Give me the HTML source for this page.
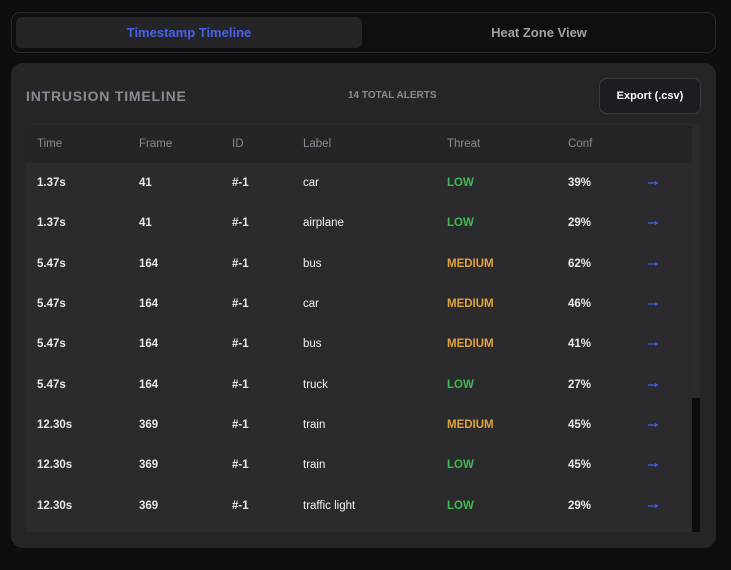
<!DOCTYPE html>
<html><head><style>
*{margin:0;padding:0;box-sizing:border-box}
body{width:731px;height:570px;background:#0e0e10;font-family:"Liberation Sans",sans-serif;position:relative;overflow:hidden;color:#e8e8ec}
.tabs{position:absolute;left:11px;top:12px;width:705px;height:41px;border:1px solid #2a2a2e;border-radius:9px;background:#0f0f11}
.tab{position:absolute;top:4px;height:31px;line-height:31px;text-align:center;font-size:13px;font-weight:bold}
.t1{left:4px;width:346px;background:#252528;border-radius:6px;color:#4660ee}
.t2{left:354px;width:346px;color:#a0a0a8}
.panel{position:absolute;left:11px;top:63px;width:705px;height:485px;background:#262629;border-radius:12px}
.title{position:absolute;left:15px;top:25px;font-size:14px;font-weight:bold;letter-spacing:0.8px;color:#8a8a94}
.total{position:absolute;left:337px;top:27px;font-size:10px;font-weight:bold;color:#8a8a94}
.export{position:absolute;left:588px;top:15px;width:102px;height:36px;border:1px solid #3a3b42;border-radius:8px;background:#1c1d22;color:#fff;font-size:11px;font-weight:bold;text-align:center;line-height:34px}
.tbl{position:absolute;left:15px;top:61px;width:666px;height:408px;overflow:hidden}
.row{position:relative;height:40.3px;font-size:11.5px;font-weight:bold}
.hd{height:39px;background:#252527;color:#8a8a94;font-weight:normal;border-top:1px solid #2c2c30}
.bd{background:#2b2b2e}
.row span{position:absolute;top:50%;transform:translateY(-50%)}
.c1{left:11px}.c2{left:113px}.c3{left:206px}.c4{left:277px}.c5{left:421px}.c6{left:542px}
.hd .c4{font-weight:normal}
.bd .c4{color:#f2f2f4;font-weight:normal}
.row svg{position:absolute;left:622px;top:50%;margin-top:-3px}
.low{color:#3dbb4e}.med{color:#e0a23a}
.sb{position:absolute;left:681px;top:61px;width:8px;height:408px;background:#0e0e10}
.th{position:absolute;left:681px;top:61px;width:8px;height:274px;background:#2c2c30}
</style></head><body>
<svg width="0" height="0" style="position:absolute"><defs><symbol id="a" viewBox="0 0 10 6"><path d="M0 3H9M7 1.5L9.5 3L7 4.5" stroke="#3a5cf0" stroke-width="1.2" fill="#3a5cf0"/></symbol></defs></svg>
<div class="tabs"><div class="tab t1">Timestamp Timeline</div><div class="tab t2">Heat Zone View</div></div>
<div class="panel">
<div class="title">INTRUSION TIMELINE</div>
<div class="total">14 TOTAL ALERTS</div>
<div class="export">Export (.csv)</div>
<div class="tbl">
<div class="row hd"><span class="c1">Time</span><span class="c2">Frame</span><span class="c3">ID</span><span class="c4">Label</span><span class="c5">Threat</span><span class="c6">Conf</span></div>
<div class="row bd"><span class="c1">1.37s</span><span class="c2">41</span><span class="c3">#-1</span><span class="c4">car</span><span class="c5 low">LOW</span><span class="c6">39%</span><svg width="10" height="6"><use href="#a"/></svg></div>
<div class="row bd"><span class="c1">1.37s</span><span class="c2">41</span><span class="c3">#-1</span><span class="c4">airplane</span><span class="c5 low">LOW</span><span class="c6">29%</span><svg width="10" height="6"><use href="#a"/></svg></div>
<div class="row bd"><span class="c1">5.47s</span><span class="c2">164</span><span class="c3">#-1</span><span class="c4">bus</span><span class="c5 med">MEDIUM</span><span class="c6">62%</span><svg width="10" height="6"><use href="#a"/></svg></div>
<div class="row bd"><span class="c1">5.47s</span><span class="c2">164</span><span class="c3">#-1</span><span class="c4">car</span><span class="c5 med">MEDIUM</span><span class="c6">46%</span><svg width="10" height="6"><use href="#a"/></svg></div>
<div class="row bd"><span class="c1">5.47s</span><span class="c2">164</span><span class="c3">#-1</span><span class="c4">bus</span><span class="c5 med">MEDIUM</span><span class="c6">41%</span><svg width="10" height="6"><use href="#a"/></svg></div>
<div class="row bd"><span class="c1">5.47s</span><span class="c2">164</span><span class="c3">#-1</span><span class="c4">truck</span><span class="c5 low">LOW</span><span class="c6">27%</span><svg width="10" height="6"><use href="#a"/></svg></div>
<div class="row bd"><span class="c1">12.30s</span><span class="c2">369</span><span class="c3">#-1</span><span class="c4">train</span><span class="c5 med">MEDIUM</span><span class="c6">45%</span><svg width="10" height="6"><use href="#a"/></svg></div>
<div class="row bd"><span class="c1">12.30s</span><span class="c2">369</span><span class="c3">#-1</span><span class="c4">train</span><span class="c5 low">LOW</span><span class="c6">45%</span><svg width="10" height="6"><use href="#a"/></svg></div>
<div class="row bd"><span class="c1">12.30s</span><span class="c2">369</span><span class="c3">#-1</span><span class="c4">traffic light</span><span class="c5 low">LOW</span><span class="c6">29%</span><svg width="10" height="6"><use href="#a"/></svg></div>
<div class="row bd"></div>
</div>
<div class="sb"></div><div class="th"></div>
</div>
</body></html>
